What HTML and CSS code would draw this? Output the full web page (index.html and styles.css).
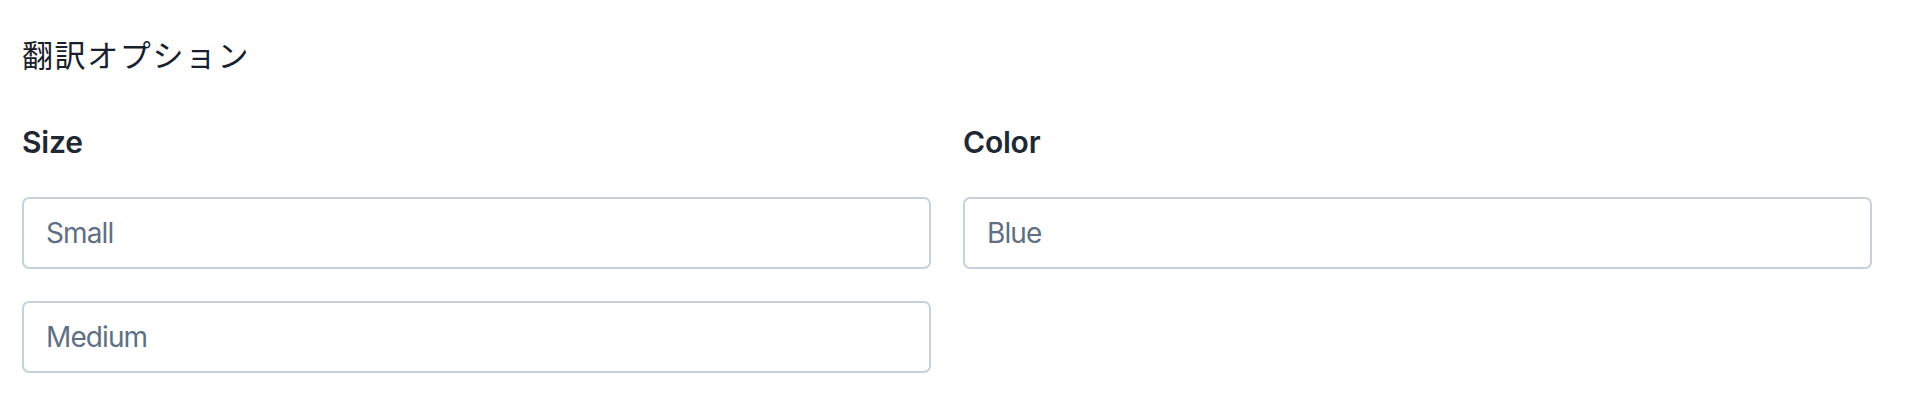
FILE: index.html
```html
<!DOCTYPE html>
<html lang="ja">
<head>
<meta charset="utf-8">
<title>翻訳オプション</title>
<link rel="stylesheet" href="styles.css">
</head>
<body>
<div class="page">
  <h2 class="title">翻訳オプション</h2>
  <div class="grid">
    <div class="col">
      <label class="label">Size</label>
      <input class="field" type="text" placeholder="Small">
      <input class="field" type="text" placeholder="Medium">
    </div>
    <div class="col">
      <label class="label">Color</label>
      <input class="field" type="text" placeholder="Blue">
    </div>
  </div>
</div>
</body>
</html>
```

FILE: styles.css
```css
html, body {
  margin: 0;
  padding: 0;
  background: #ffffff;
}
body {
  font-family: Inter, "Noto Sans CJK JP", "Liberation Sans", sans-serif;
  color: #1f2933;
}
.page {
  padding: 36px 36px 0 22px;
}
.title {
  margin: 0;
  font-family: "Noto Sans CJK JP", sans-serif;
  font-size: 31px;
  font-weight: 400;
  letter-spacing: 1.6px;
  line-height: 36px;
  color: #18212b;
}
.grid {
  display: grid;
  grid-template-columns: 1fr 1fr;
  column-gap: 32px;
  margin-top: 52px;
}
.col {
  display: flex;
  flex-direction: column;
  gap: 32px;
}
.label {
  font-size: 30px;
  font-weight: 600;
  letter-spacing: -0.2px;
  line-height: 36px;
  color: #1f2933;
  margin-bottom: 5px;
}
.field {
  box-sizing: border-box;
  width: 100%;
  height: 72px;
  border: 2px solid #c8d0d9;
  border-radius: 7px;
  padding: 0 22px;
  font-family: Inter, "Liberation Sans", sans-serif;
  font-size: 28px;
  letter-spacing: -0.9px;
  color: #1f2933;
  background: #fff;
  outline: none;
}
.field::placeholder {
  color: #5f7083;
  opacity: 1;
}
```
